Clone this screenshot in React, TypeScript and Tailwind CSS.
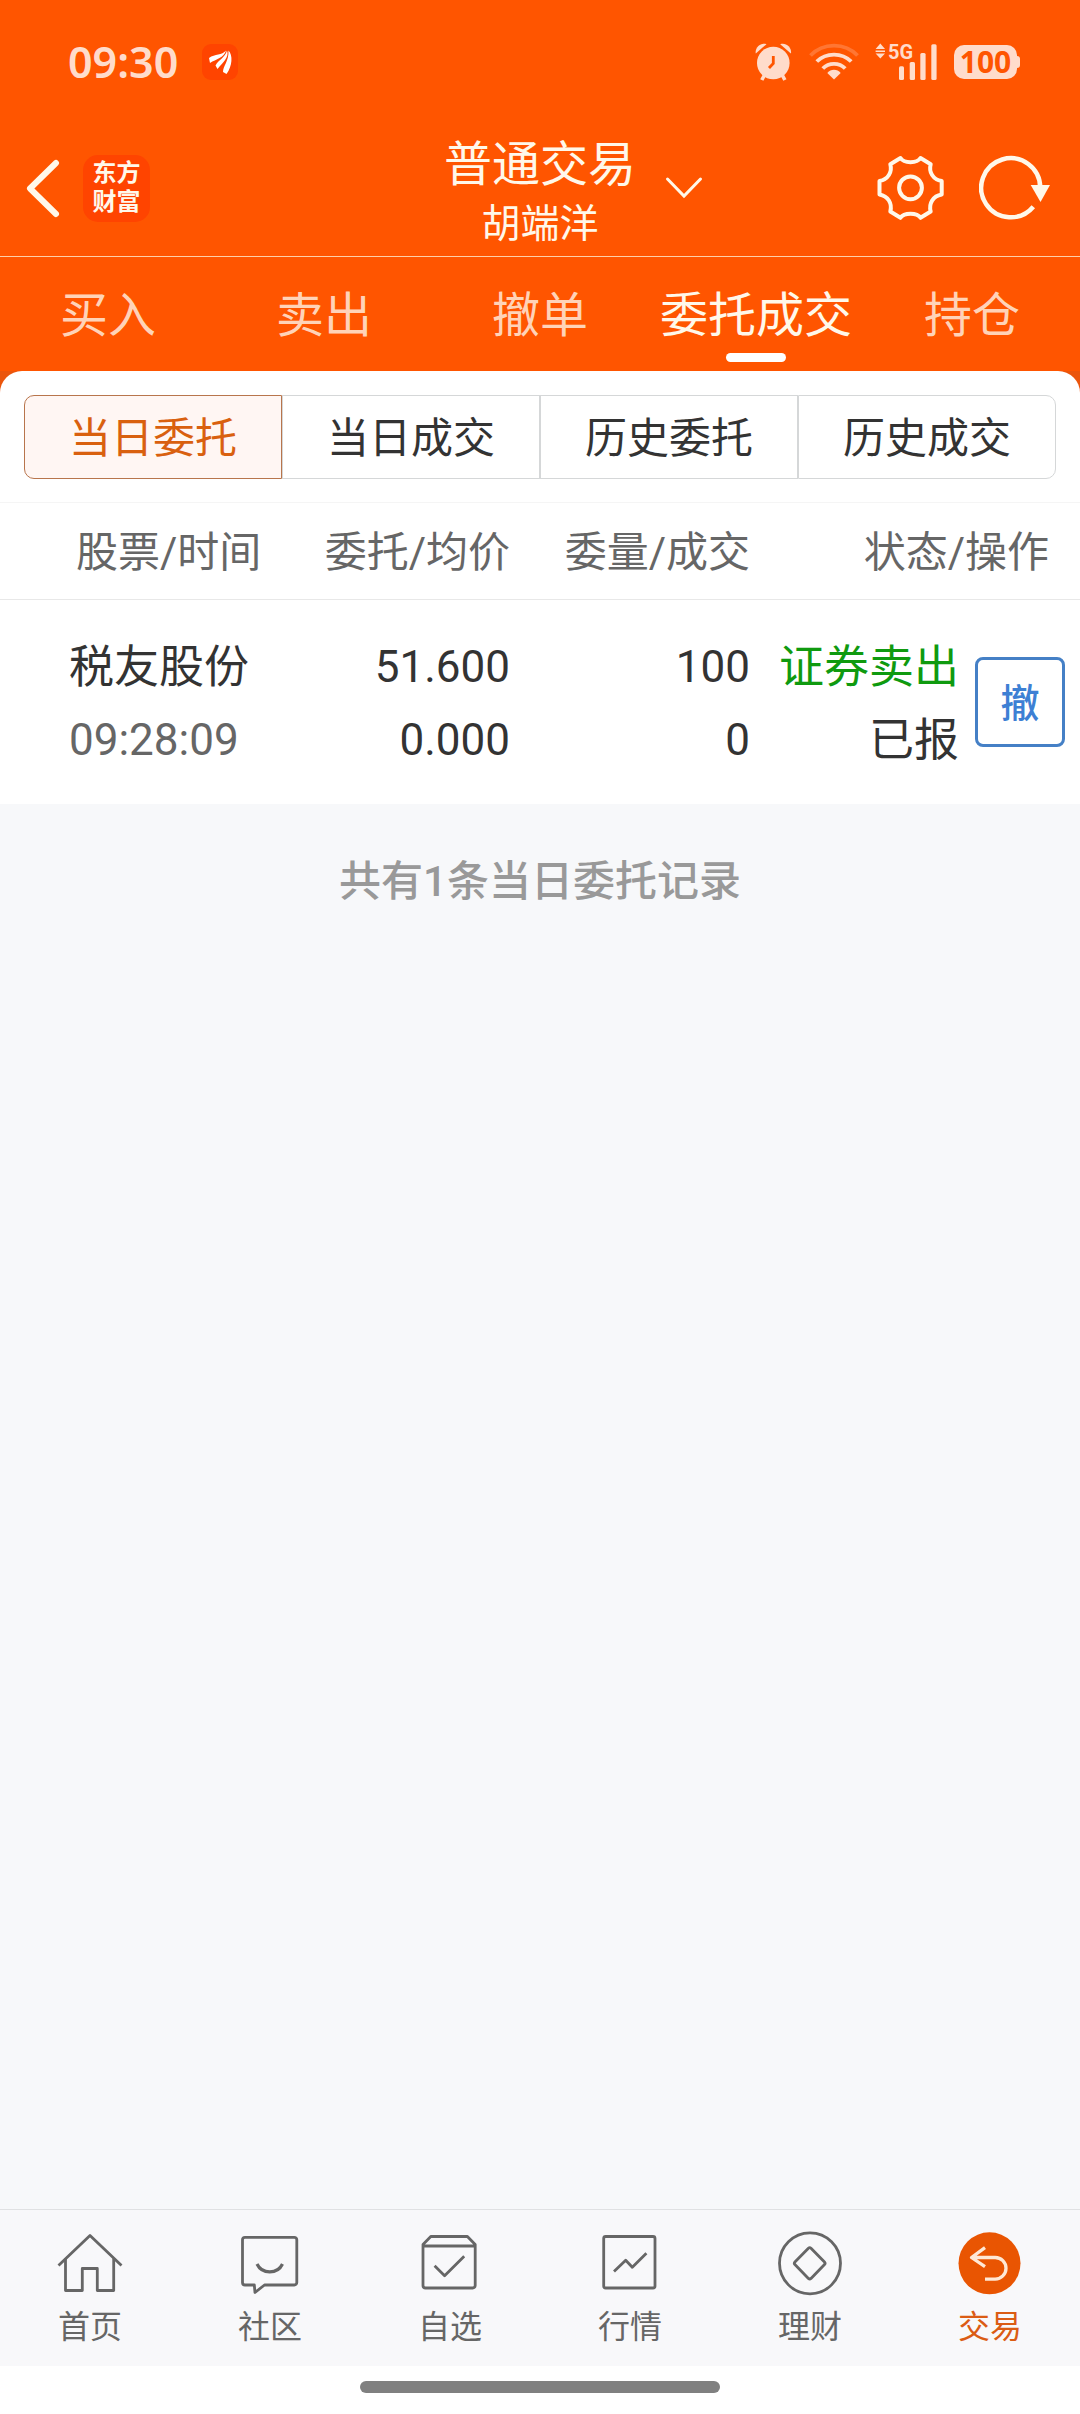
import { useState } from "react";
import type { ReactNode } from "react";

const TRADE_TABS = ["买入", "卖出", "撤单", "委托成交", "持仓"];

const ORDER_TABS = ["当日委托", "当日成交", "历史委托", "历史成交"];

const ORDERS = [
  { name: "税友股份", time: "09:28:09", price: "51.600", avg: "0.000", amount: "100", filled: "0", side: "证券卖出", status: "已报" },
];

const NAV_ITEMS: { label: string; icon: ReactNode }[] = [
  {
    label: "首页",
    icon: (
      <>
        <path d="M4.5 38.5 36 8.5l31.5 30" />
        <path d="M11.5 31.5v32h16.8V41.5h15v22h16.4v-32" />
      </>
    ),
  },
  {
    label: "社区",
    icon: (
      <>
        <path d="M20.3 58H11a2.5 2.5 0 0 1-2.5-2.5v-42.7a2.5 2.5 0 0 1 2.5-2.5h49.3a2.5 2.5 0 0 1 2.5 2.5v42.7a2.5 2.5 0 0 1-2.5 2.5H30.5l-9.5 7.5Z" />
        <path d="M23 37c5 10.5 20.5 10.5 25.5 0" strokeWidth="3.2" />
      </>
    ),
  },
  {
    label: "自选",
    icon: (
      <>
        <path d="M9 19h52.2v39.5a2.5 2.5 0 0 1-2.5 2.5H11.5A2.5 2.5 0 0 1 9 58.5V17.5l7.800-8h36.6l7.800 8V20" />
        <path d="m20.6 38.7 10 10 19.6-19.4" />
      </>
    ),
  },
  {
    label: "行情",
    icon: (
      <>
        <rect x="9.7" y="9.5" width="51.3" height="51.5" rx="2" />
        <path d="m20 44.5 11.7-11.3 6.6 7.1 14.1-14.1" />
      </>
    ),
  },
  {
    label: "理财",
    icon: (
      <>
        <circle cx="36" cy="36.3" r="30.5" />
        <path d="M34.4 21.2 20.9 35q-1.2 1.3 0 2.6l13.5 13.8q1.3 1.2 2.6 0L50.5 37.6q1.2-1.3 0-2.6L37 21.2q-1.3-1.2-2.6 0Z" />
      </>
    ),
  },
  {
    label: "交易",
    icon: (
      <>
        <circle cx="35.5" cy="36.3" r="31" className="fill-[#e95502] stroke-none" />
        <path d="M31 20.7 17.5 30.5 31 39.7M17.500 30.5h23.7a10.8 10.8 0 0 1 0 21.6H31" className="stroke-[#ffe8d5]" strokeWidth="3.3" />
      </>
    ),
  },
];

function StatusBar() {
  return (
    <div className="flex h-[120px] items-center justify-between pt-1 pr-[60px] pl-[68px]">
      <div className="flex items-center gap-6">
        <span className="font-['Noto_Sans'] text-[43px] leading-[48px] font-semibold text-[#ffdccb]">09:30</span>
        <svg viewBox="0 0 36 36" className="h-9 w-9">
          <rect width="36" height="36" rx="9" fill="#ff4400" />
          <g fill="#fff">
            <path d="M7 14C13 9.5 20 11.5 24 6.5 22 14 14 15 8 19Z" />
            <path d="M13.5 21.5C17 15 23 14 25 6.5c2.5 6.5-4 12-9.5 18.5Z" />
            <path d="M21 28c0-6 6-11 5.5-21.5C31 11 30.5 22 24.5 30Z" />
          </g>
        </svg>
      </div>
      <div className="flex items-center gap-4">
        <svg viewBox="0 0 38 38" className="h-[38px] w-[38px] text-[#ffdccb]" fill="currentColor">
          <path d="M.8 10.5C-.5 5 5.5-1 11.5 1.2Z" />
          <path d="M35.9 10.5C37.2 5 31.2-1 25.2 1.2Z" />
          <circle cx="18.3" cy="20" r="16.3" />
          <path d="m9.5 32-2.7 5M27.2 32l2.7 5" stroke="currentColor" strokeWidth="3.6" />
          <path d="M18.3 13v7.5L14 25" fill="none" stroke="#ff5500" strokeWidth="2.8" />
        </svg>
        <svg viewBox="0 0 50 38" className="h-[38px] w-[50px] text-[#ffdccb]" fill="none" stroke="currentColor" strokeWidth="3.8">
          <path d="M1.5 12.5C14-.8 36-.8 48.5 12.5" opacity=".25" />
          <path d="M7.8 18.5c9.2-9.3 25.2-9.3 34.4 0" />
          <path d="M13.8 25.5c6-6.3 16.4-6.3 22.4 0" />
          <path d="M18.3 30c3.5-4.2 9.9-4.2 13.4 0L25 36.5Z" fill="currentColor" stroke="none" />
        </svg>
        <svg viewBox="0 0 63 38" className="h-[38px] w-[63px] overflow-visible text-[#ffdccb]" fill="currentColor">
          <path d="m5.3.5 4.7 5.500H.6ZM.6 7.500H10V9H.6Zm0 3H10L5.300 15.500Z" />
          <text x="13" y="16" fontSize="20" fontWeight="700" className="font-['Roboto']">5G</text>
          <rect x="24" y="23.3" width="5" height="13.7" rx="1.5" />
          <rect x="34.7" y="19" width="5.3" height="18" rx="1.5" />
          <rect x="45.3" y="10" width="5.3" height="27" rx="1.5" />
          <rect x="56.3" y="1.3" width="5.3" height="35.7" rx="1.5" />
        </svg>
        <div className="flex items-center">
          <span className="flex h-[34px] w-[63px] items-center justify-center rounded-[10px] bg-[#ffdccb] font-['Noto_Sans'] text-[30px] leading-[34px] font-bold text-[#ff5500]">100</span>
          <span className="h-3 w-[3px] rounded-r-[3px] bg-[#ffdccb]" />
        </div>
      </div>
    </div>
  );
}

function TitleBar() {
  return (
    <header className="grid h-[137px] grid-cols-[1fr_auto_1fr] items-center border-b border-[#ffcfa8] text-[#fff8ea]">
      <div className="flex items-center gap-5 pl-[23px]">
        <button aria-label="返回">
          <svg viewBox="0 0 40 60" className="h-[60px] w-10" fill="none" stroke="currentColor" strokeWidth="6" strokeLinecap="round" strokeLinejoin="round">
            <path d="M33 5 7 30.500 33 56" />
          </svg>
        </button>
        <div className="flex h-[67px] w-[67px] flex-col items-center justify-center rounded-[15px] bg-[#ff4400] text-[24px] leading-[29px] font-bold">
          <span>东方</span>
          <span>财富</span>
        </div>
      </div>
      <h1 className="flex flex-col items-center pt-[10px]">
        <span className="text-[48px] leading-[62px]">普通交易</span>
        <span className="text-[39px] leading-[56px]">胡端洋</span>
      </h1>
      <div className="flex items-center justify-between pr-[29px] pl-7">
        <button aria-label="切换账户">
          <svg viewBox="0 0 40 24" className="h-6 w-10" fill="none" stroke="currentColor" strokeWidth="3" strokeLinecap="round">
            <path d="m3.500 3 16.500 17L36.500 3" />
          </svg>
        </button>
        <div className="flex gap-8">
          <button aria-label="设置">
            <svg viewBox="0 0 72 72" className="h-[72px] w-[72px]" fill="none" stroke="currentColor" strokeWidth="4" strokeLinejoin="round">
              <path d="M25.500 6C29 11.500 42 11.500 45.500 6L55.700 12.200C53.500 20 58 27.500 66.700 29v13.500C58 44 53.500 51.500 55.700 59.500L45.500 65.800C42 60.300 29 60.300 25.500 65.800L15.300 59.500C17.500 51.500 13 44 4.500 42.500V29C13 27.500 17.500 20 15.300 12.200Z" />
              <circle cx="35.500" cy="35.800" r="11.400" />
            </svg>
          </button>
          <button aria-label="刷新">
            <svg viewBox="0 0 72 72" className="h-[72px] w-[72px]" fill="none" stroke="currentColor" strokeWidth="4.500">
              <path d="M61.200 35.700A29.500 29.500 0 1 0 54.300 54.700" />
              <path d="M51.700 33H71l-9.500 17Z" fill="currentColor" stroke="none" />
            </svg>
          </button>
        </div>
      </div>
    </header>
  );
}

function OrderTable() {
  return (
    <table className="w-full table-fixed border-collapse text-right text-[#333]">
      <thead>
        <tr className="h-[97px] border-y border-t-[#f5f5f5] border-b-[#e8e8e8] text-[42px] leading-[60px] text-[#666]">
          <th className="pt-1 pl-[76px] text-left font-normal whitespace-nowrap">股票/时间</th>
          <th className="w-[240px] pt-1 font-normal whitespace-nowrap">委托/均价</th>
          <th className="w-[240px] pt-1 font-normal whitespace-nowrap">委量/成交</th>
          <th className="w-[330px] pt-1 pr-[31px] font-normal whitespace-nowrap">状态/操作</th>
        </tr>
      </thead>
      <tbody>
        {ORDERS.map((o) => (
          <tr key={o.time} className="h-[204px] text-[44px] leading-[73px]">
            <td className="pt-1 pl-[69px] text-left">
              <div className="text-[45px]">{o.name}</div>
              <div className="text-[#666]">{o.time}</div>
            </td>
            <td className="pt-1">
              <div>{o.price}</div>
              <div>{o.avg}</div>
            </td>
            <td className="pt-1">
              <div>{o.amount}</div>
              <div>{o.filled}</div>
            </td>
            <td className="pr-[15px]">
              <div className="flex items-center justify-end gap-4">
                <div className="pt-1 text-[45px]">
                  <div className="text-[#0f9a0f]">{o.side}</div>
                  <div>{o.status}</div>
                </div>
                <button className="h-[90px] w-[90px] rounded-lg border-3 border-[#4580c6] pt-1 text-[39px] leading-[60px] font-medium text-[#3d80d4]">撤</button>
              </div>
            </td>
          </tr>
        ))}
      </tbody>
    </table>
  );
}

export default function App() {
  const [tab, setTab] = useState("委托成交");
  const [orderTab, setOrderTab] = useState("当日委托");
  const [nav, setNav] = useState("交易");

  return (
    <div className="flex min-h-screen flex-col bg-[#f7f8fa] font-['Roboto','Noto_Sans_CJK_SC',sans-serif]">
      <div className="bg-[#ff5500]">
        <StatusBar />
        <TitleBar />
        <nav className="grid h-[114px] grid-cols-5">
          {TRADE_TABS.map((t) => (
            <button key={t} onClick={() => setTab(t)} className={`relative pt-1 text-[48px] leading-[70px] whitespace-nowrap ${tab === t ? "text-[#fff8ea]" : "text-[#ffd3b8]"}`}>
              {t}
              {tab === t && <span className="absolute bottom-[9px] left-1/2 h-[9px] w-[60px] -translate-x-1/2 rounded-full bg-white" />}
            </button>
          ))}
        </nav>
      </div>

      <main className="grow">
        <div className="bg-[#eb550c]">
          <section className="rounded-t-[22px] bg-white pt-6">
            <div className="mx-6 mb-[23px] grid h-[84px] grid-cols-4">
              {ORDER_TABS.map((t) => (
                <button
                  key={t}
                  onClick={() => setOrderTab(t)}
                  className={`border pt-1 text-[42px] leading-[60px] whitespace-nowrap first:rounded-l-[10px] last:rounded-r-[10px] ${orderTab === t ? "border-[#b8754c] bg-[#fff6f3] text-[#d9600f]" : "border-[#d5d7d8] text-[#333]"}`}
                >
                  {t}
                </button>
              ))}
            </div>
            <OrderTable />
          </section>
        </div>
        <p className="pt-12 text-center text-[42px] leading-[60px] font-medium text-[#999]">共有1条当日委托记录</p>
      </main>

      <nav className="grid h-[157px] grid-cols-6 border-t border-[#e0e1e3] bg-[#f8f8fa]">
        {NAV_ITEMS.map((n) => (
          <button key={n.label} onClick={() => setNav(n.label)} className={`flex flex-col items-center pt-[17px] ${nav === n.label ? "text-[#db5c14]" : "text-[#666]"}`}>
            <svg viewBox="0 0 72 72" className="h-[72px] w-[72px]" fill="none" stroke="currentColor" strokeWidth="2.800" strokeLinejoin="round">
              {n.icon}
            </svg>
            <span className="text-[32px] leading-[56px]">{n.label}</span>
          </button>
        ))}
      </nav>
      <div className="flex h-12 justify-center bg-white pt-[15px]">
        <div className="h-3 w-1/3 rounded-full bg-[#808080]" />
      </div>
    </div>
  );
}
